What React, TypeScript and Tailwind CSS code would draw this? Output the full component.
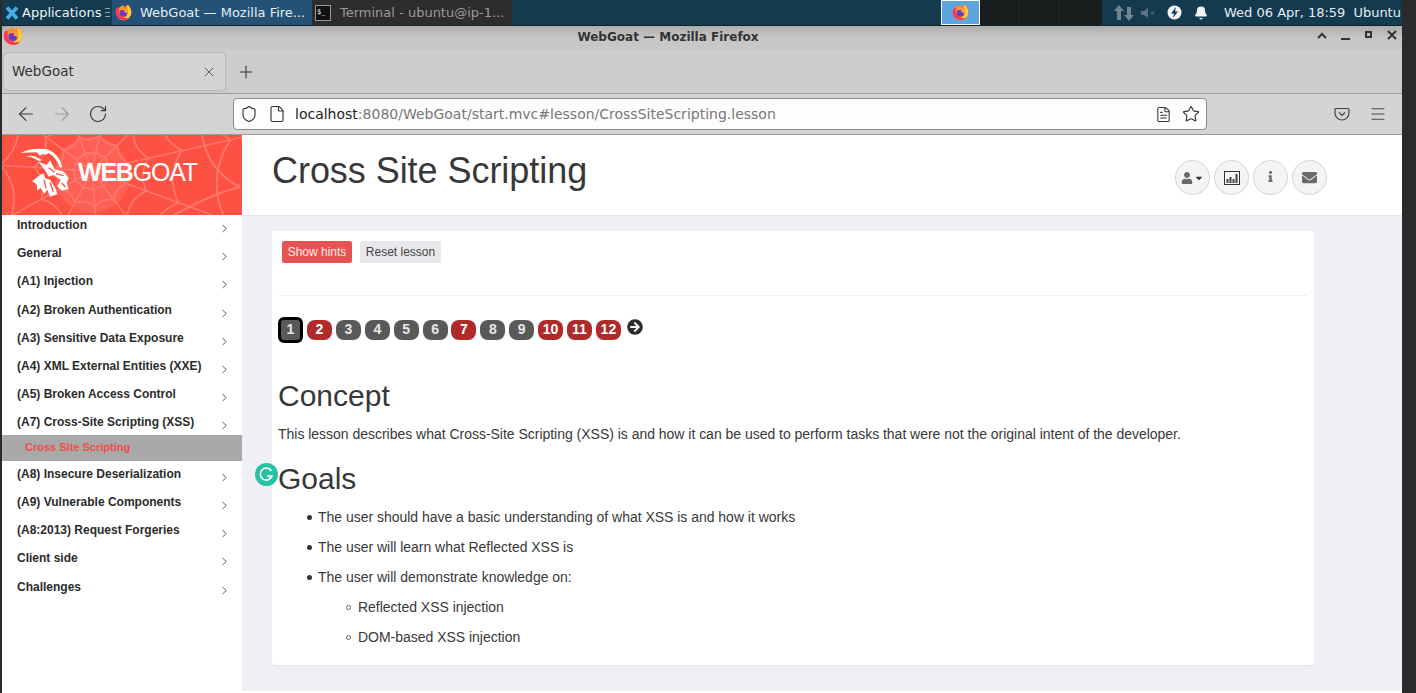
import React from "react";
import { ArrowLeft, ArrowRight, Bell, ChevronRight, File, FileText, Menu, Plus, RotateCw, Shield, Star, X } from "lucide-react";
import { FaArrowCircleRight, FaCaretDown, FaEnvelope, FaInfo, FaUser } from "react-icons/fa";

const topMenu = [
  "Introduction",
  "General",
  "(A1) Injection",
  "(A2) Broken Authentication",
  "(A3) Sensitive Data Exposure",
  "(A4) XML External Entities (XXE)",
  "(A5) Broken Access Control",
];
const bottomMenu = [
  "(A8) Insecure Deserialization",
  "(A9) Vulnerable Components",
  "(A8:2013) Request Forgeries",
  "Client side",
  "Challenges",
];
const pages = [
  { n: 2, red: true },
  { n: 3, red: false },
  { n: 4, red: false },
  { n: 5, red: false },
  { n: 6, red: false },
  { n: 7, red: true },
  { n: 8, red: false },
  { n: 9, red: false },
  { n: 10, red: true },
  { n: 11, red: true },
  { n: 12, red: true },
];

function FirefoxLogo({ size }: { size: number }) {
  return (
    <svg width={size} height={size} viewBox="0 0 24 24">
      <path d="M12 1.5l1.5 3 5-3.5c2 1.500 4.500 5 4.500 10.500a11 11 0 1 1-22 0c0-3 1-5 2-6.500l1 2.500 2-3z" fill="#ff8a2b" />
      <path d="M17 1c3 2.500 6 6 6 11 0 6-5 11-11 11-3 0-6-1.500-8-4 6 3 14 0 14-8 0-3-1-7-1-10z" fill="#ffc93a" />
      <path d="M1 12a11 11 0 0 0 20 6c-4 3-11 2-14-2-2-3-2-6-1-9L3.500 5C2 7 1 9 1 12z" fill="#f6365a" />
      <circle cx="12" cy="12.500" r="5.500" fill="#6b36c9" />
      <path d="M7 8c2-2 6-3 9-1 2 2 2 5 1 7-1-2-3-3-5-3l2-2c-2-1-4-1-5 0z" fill="#ffa12e" />
    </svg>
  );
}

function WebPattern() {
  const spokes = Array.from({ length: 11 }, (_, i) => (i / 11) * Math.PI * 2 + 0.35);
  const rings = [20, 36, 58, 92, 142];
  const cx = 90;
  const cy = 36;
  const pt = (r: number, a: number) => [cx + r * Math.cos(a), cy + r * Math.sin(a)];
  return (
    <svg className="absolute inset-0" width="240" height="80" viewBox="0 0 240 80" fill="none">
      <circle cx={cx} cy={cy + 4} r="38" fill="#ff6054" />
      {spokes.map((a, i) => {
        const [x, y] = pt(260, a);
        return <line key={i} x1={cx} y1={cy} x2={x} y2={y} stroke="#ff766b" strokeWidth="1.600" />;
      })}
      {rings.map((r) =>
        spokes.map((a, i) => {
          const b = spokes[(i + 1) % spokes.length];
          const [x1, y1] = pt(r, a);
          const [x2, y2] = pt(r, b);
          const [qx, qy] = pt(r * 0.8, (a + b + (i === spokes.length - 1 ? Math.PI * 2 : 0)) / 2);
          return <path key={r + "-" + i} d={`M${x1} ${y1}Q${qx} ${qy} ${x2} ${y2}`} stroke="#ff766b" strokeWidth="1.800" />;
        })
      )}
      <path d="M200 0Q206 36 238 52M238 52Q212 58 172 80" stroke="#ff766b" strokeWidth="2" />
    </svg>
  );
}

function GoatLogo() {
  return (
    <svg width="50" height="50" viewBox="60 45 150 150" fill="#fff">
      <path d="M62 60Q100 42 145 50Q175 60 187 102L180 105Q170 74 146 60Q137 68 128 62L120 68L110 58Q88 58 62 60Z" />
      <path d="M78 70Q104 64 124 82L116 84Q100 72 78 70Z" />
      <path d="M115 86L140 96L150 82L165 110L190 115L206 135L200 150L206 168L186 173L172 160L182 141L160 126L146 131L134 110Z" />
      <path d="M96 145L120 126L130 120L136 136L150 140L166 165L172 184L150 191L142 170L133 183L122 165L112 173L110 154Z" />
      <path d="M146 104L164 118M168 122L190 128M150 148L160 176M132 140L138 166M186 150L196 162M160 130L172 146" stroke="#fd5143" strokeWidth="4" fill="none" />
    </svg>
  );
}

function MenuRow({ label, short }: { label: string; short?: boolean }) {
  return (
    <div className={`flex justify-between pl-[15px] pr-[11px] pt-[3px] ${short ? "h-[22.6px]" : "h-[28.2px]"}`}>
      <span className="text-[12px] leading-[14px] font-bold text-[#2b2b2b]">{label}</span>
      <ChevronRight size={13} strokeWidth={1.400} className="mt-[4px] text-[#222]" />
    </div>
  );
}

function CircleButton({ children }: { children: React.ReactNode }) {
  return (
    <div className="flex h-[35px] w-[35px] items-center justify-center rounded-full border border-[#d5d5d5] bg-[#f4f4f4] text-[#6a6a6a]">
      {children}
    </div>
  );
}

const bullet = "relative before:absolute before:left-[-11.500px] before:top-[8px] before:h-[5px] before:w-[5px] before:rounded-full before:bg-[#333]";
const ring = "relative before:absolute before:left-[-12.500px] before:top-[8px] before:h-[5px] before:w-[5px] before:rounded-full before:border before:border-[#666]";

export default function App() {
  return (
    <div className="flex h-[693px] w-full overflow-hidden bg-[#2a2a2a] pl-[2px] pr-[14px] font-['Liberation_Sans',sans-serif]">
      <div className="flex min-w-0 flex-1 flex-col">
        {/* desktop panel */}
        <div className="flex h-[26px] shrink-0 items-stretch border-b border-[#10222d] bg-[#143a4f] font-['DejaVu_Sans',sans-serif] text-[13px] whitespace-nowrap">
          <div className="flex w-[110px] items-center">
            <svg className="ml-[3px]" width="14" height="14" viewBox="0 0 14 14" fill="none" stroke="#45b0e6" strokeWidth="3.600">
              <path d="M2 1.500l10 11M12 1.500l-10 11" />
            </svg>
            <span className="ml-[3px] text-[#eef2f4]">Applications</span>
            <svg className="ml-[4px]" width="5" height="9" viewBox="0 0 5 9" stroke="#8fa3ae">
              <path d="M0 .5h5M0 4.500h5M0 8.500h5" />
            </svg>
          </div>
          <div className="flex w-[200px] items-center bg-[#235276] pl-[3px] text-[#e6edf2]">
            <FirefoxLogo size={17} />
            <span className="ml-[8px]">WebGoat — Mozilla Fire...</span>
          </div>
          <div className="flex w-[200px] items-center rounded-tr-sm bg-[#2d2d2d] pl-[3px] text-[#9a9a9a]">
            <div className="flex h-[16px] w-[16px] items-start border border-[#999] bg-[#111] pl-[1px] font-['DejaVu_Sans_Mono',monospace] text-[7px] leading-[12px] text-white">$_</div>
            <span className="ml-[9px]">Terminal - ubuntu@ip-1...</span>
          </div>
          <div className="flex-1" />
          <div className="flex w-[39px] items-center justify-center border border-white bg-[#5ca5dd]">
            <FirefoxLogo size={17} />
          </div>
          <div className="w-[40px] border-r border-[#24292c] bg-[#1a1d1e]" />
          <div className="w-[40px] border-r border-[#24292c] bg-[#1a1d1e]" />
          <div className="w-[42px] bg-[#1a1d1e]" />
          <div className="flex w-[300px] items-center pl-[12px] text-[#e6edf2]">
            <svg width="20" height="18" viewBox="0 0 20 18" fill="#71858f">
              <path d="M5 1l5 6H7v9H3V7H0zM15 17l5-6h-3V3h-4v8h-3z" />
            </svg>
            <svg className="ml-[7px]" width="14" height="12" viewBox="0 0 14 12" fill="#5d7480" stroke="#5d7480">
              <path d="M0 4h3l4-3v10L3 8H0z" stroke="none" />
              <path d="M10 4.500l3 3M13 4.500l-3 3" fill="none" />
            </svg>
            <svg className="ml-[12px]" width="15" height="15" viewBox="0 0 15 15">
              <circle cx="7.500" cy="7.500" r="7" fill="#f2f4f5" />
              <path d="M9 2L4 8.500h3L6 13l5-6.500H8z" fill="#143a4f" />
            </svg>
            <Bell size={14} fill="#f2f4f5" className="ml-[12px] text-[#f2f4f5]" />
            <span className="ml-[16px]">Wed 06 Apr, 18:59</span>
            <span className="ml-[8px]">Ubuntu</span>
          </div>
        </div>

        {/* window title */}
        <div className="relative flex h-[24px] shrink-0 items-center justify-center bg-gradient-to-b from-[#adadad] via-[#c6c6c6] to-[#c8c8c8] pb-[2px] pr-[68px] font-['DejaVu_Sans',sans-serif] text-[12px] font-bold text-[#333]">
          <div className="absolute left-[1px] top-0">
            <FirefoxLogo size={20} />
          </div>
          WebGoat — Mozilla Firefox
          <div className="absolute right-[4px] top-[4px] flex items-center gap-[12px] text-[#333]">
            <svg width="12" height="12" viewBox="0 0 12 12" fill="none" stroke="#333" strokeWidth="2"><path d="M2 8l4-4 4 4" /></svg>
            <svg width="12" height="12" viewBox="0 0 12 12" fill="#333"><rect x="1" y="8" width="9" height="2" /></svg>
            <svg width="10" height="12" viewBox="0 0 10 12" fill="none" stroke="#333" strokeWidth="2"><rect x="2" y="2" width="5" height="5" /></svg>
            <svg width="12" height="12" viewBox="0 0 12 12" fill="none" stroke="#333" strokeWidth="2"><path d="M2 1l8 8M10 1L2 9" /></svg>
          </div>
        </div>

        {/* tab strip */}
        <div className="flex h-[44px] shrink-0 items-start border-b border-[#9c9c9c] bg-[#cdcdcd] pl-[2px] pt-[3px]">
          <div className="flex h-[37px] w-[221px] items-center justify-between rounded-[4px] bg-[#d4d4d4] pl-[8px] pr-[8px] font-['DejaVu_Sans',sans-serif] text-[13.500px] text-[#333] shadow-[0_0_2px_rgba(0,0,0,0.3)]">
            WebGoat
            <X size={16} strokeWidth={1.200} className="text-[#444]" />
          </div>
          <Plus size={20} strokeWidth={1.300} className="ml-[11px] mt-[9px] text-[#333]" />
        </div>

        {/* nav bar */}
        <div className="flex h-[41px] shrink-0 items-center border-b border-[#9c9c9c] bg-[#d4d4d4] pl-[13px]">
          <ArrowLeft size={22} strokeWidth={1.200} className="text-[#3a3a3a]" />
          <ArrowRight size={22} strokeWidth={1.200} className="ml-[14px] text-[#9a9a9a]" />
          <RotateCw size={20} strokeWidth={1.400} className="ml-[15px] text-[#3a3a3a]" />
          <div className="ml-[125px] flex h-[32px] w-[974px] items-center rounded-[4px] border border-[#8c8c8c] bg-[#fdfdfd] pl-[6px] pr-[6px] font-['DejaVu_Sans',sans-serif] text-[14px]">
            <Shield size={18} strokeWidth={1.500} className="text-[#333]" />
            <File size={18} strokeWidth={1.500} className="ml-[10px] text-[#333]" />
            <span className="ml-[9px] flex-1 text-[#777]"><span className="text-[#222]">localhost</span>:8080/WebGoat/start.mvc#lesson/CrossSiteScripting.lesson</span>
            <FileText size={17} strokeWidth={1.500} className="text-[#333]" />
            <Star size={18} strokeWidth={1.500} className="ml-[10px] text-[#333]" />
          </div>
          <svg className="ml-[127px]" width="16" height="16" viewBox="0 0 16 16" fill="none" stroke="#444" strokeWidth="1.200">
            <path d="M2 2.500h12a1 1 0 0 1 1 1V7a7 7 0 0 1-14 0V3.500a1 1 0 0 1 1-1z" />
            <path d="M5 6.500l3 3 3-3" />
          </svg>
          <Menu size={18} strokeWidth={1.300} className="ml-[19px] text-[#444]" />
        </div>

        {/* page */}
        <div className="flex min-h-0 flex-1 bg-white">
          <aside className="w-[240px] shrink-0">
            <div className="relative h-[80px] overflow-hidden bg-[#fd5143]">
              <WebPattern />
              <div className="relative flex h-full items-center pl-[18px] pb-[4px]">
                <GoatLogo />
                <span className="ml-[8px] text-[25px] tracking-[-1.200px] text-white"><b>WEB</b>GOAT</span>
              </div>
            </div>
            {topMenu.map((label) => (
              <MenuRow key={label} label={label} />
            ))}
            <MenuRow label="(A7) Cross-Site Scripting (XSS)" short />
            <div className="mb-[3px] flex h-[26px] items-center bg-[#a9a9a9] pb-[1px] pl-[23px] text-[11px] font-bold text-[#f04b4b]">
              Cross Site Scripting
            </div>
            {bottomMenu.map((label) => (
              <MenuRow key={label} label={label} />
            ))}
          </aside>

          <main className="flex min-w-0 flex-1 flex-col">
            <header className="flex h-[81px] shrink-0 items-start justify-between border-b border-[#e6e8ee] pl-[30px] pr-[75px]">
              <h1 className="mt-[16px] text-[36px] leading-[40px] tracking-[-0.05px] text-[#383838]">Cross Site Scripting</h1>
              <div className="mt-[25px] flex gap-[4px]">
                <CircleButton>
                  <FaUser size={12} className="mr-[1px]" />
                  <FaCaretDown size={10} className="text-[#333]" />
                </CircleButton>
                <CircleButton>
                  <svg width="16" height="14" viewBox="0 0 16 14">
                    <rect x="0.500" y="0.500" width="15" height="13" fill="none" stroke="#333" />
                    <path d="M2.500 8h2v4h-2zM5.500 6h2v6h-2zM8.500 8h2v4h-2zM11.500 3h2v9h-2z" fill="#444" />
                  </svg>
                </CircleButton>
                <CircleButton>
                  <FaInfo size={11} className="mb-[2px]" />
                </CircleButton>
                <CircleButton>
                  <FaEnvelope size={15} />
                </CircleButton>
              </div>
            </header>

            <div className="mb-[2px] flex-1 bg-[#eff0f6] pl-[30px] pt-[15px]">
              <div className="relative h-[434px] w-[1042px] rounded-[4px] bg-white px-[6px] pt-[10px] text-[#383838] shadow-[0_1px_2px_rgba(0,0,0,0.05)]">
                <div className="ml-[4px] flex gap-[8px] text-[12px]">
                  <div className="flex h-[22px] w-[70px] items-center justify-center rounded-[2px] bg-[#e55353] text-[#fbeaea]">Show hints</div>
                  <div className="flex h-[22px] w-[81px] items-center justify-center rounded-[2px] bg-[#e8e8ec] text-[#444]">Reset lesson</div>
                </div>
                <div className="mr-[1px] mt-[32px] border-t border-[#f0f0f2]" />

                <div className="mt-[21px] flex h-[26px] items-start text-[14px] font-bold text-[#e8e8e8]">
                  <div className="flex h-[26px] w-[25px] items-center justify-center rounded-[6px] border-[3px] border-black bg-[#595959] pb-[1px]">1</div>
                  <div className="ml-[4px] mt-[3px] flex gap-[3.900px]">
                    {pages.map((p) => (
                      <div key={p.n} className={`flex h-[20px] w-[25px] items-center justify-center rounded-[8px] pb-[2px] ${p.red ? "bg-[#b02a2a] text-white" : "bg-[#595959]"}`}>
                        {p.n}
                      </div>
                    ))}
                  </div>
                  <FaArrowCircleRight size={16} className="ml-[6px] mt-[2px] text-[#2b2b2b]" />
                </div>

                <h2 className="mt-[35px] text-[30px] leading-[36px]">Concept</h2>
                <p className="mt-[10px] text-[14px] leading-[20px] tracking-[-0.02px]">
                  This lesson describes what Cross-Site Scripting (XSS) is and how it can be used to perform tasks that were not the original intent of the developer.
                </p>
                <div className="absolute left-[-17px] top-[232px] flex h-[23px] w-[23px] items-center justify-center rounded-full bg-[#27c2a4]">
                  <svg width="15" height="15" viewBox="0 0 15 15" fill="none" stroke="#fff" strokeWidth="1.600">
                    <path d="M12.500 4A6 6 0 1 0 13 9H8" />
                    <path d="M13 9l-2.500 2.500" />
                  </svg>
                </div>
                <h2 className="mt-[17px] text-[30px] leading-[36px]">Goals</h2>
                <ul className="mt-[10px] pl-[40px] text-[14px] leading-[20px] tracking-[-0.02px]">
                  <li className={`mb-[10px] ${bullet}`}>The user should have a basic understanding of what XSS is and how it works</li>
                  <li className={`mb-[10px] ${bullet}`}>The user will learn what Reflected XSS is</li>
                  <li className={bullet}>
                    The user will demonstrate knowledge on:
                    <ul className="mt-[10px] pl-[40px]">
                      <li className={`mb-[10px] ${ring}`}>Reflected XSS injection</li>
                      <li className={ring}>DOM-based XSS injection</li>
                    </ul>
                  </li>
                </ul>
              </div>
            </div>
          </main>
        </div>
      </div>
    </div>
  );
}
